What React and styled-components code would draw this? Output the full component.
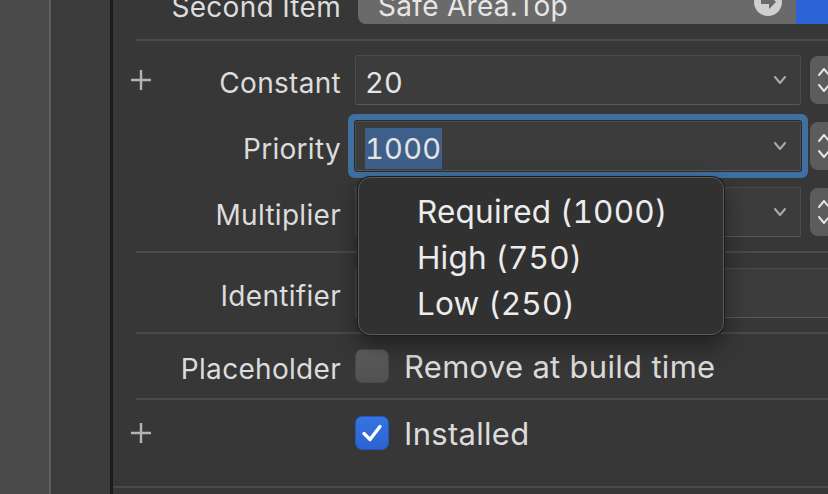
import React from 'react';
import styled, { createGlobalStyle } from 'styled-components';

const GlobalStyle = createGlobalStyle`
  html, body {
    margin: 0;
    padding: 0;
    background: #373737;
    overflow: hidden;
  }
  * {
    box-sizing: border-box;
  }
`;

const PlusIcon = () => (
  <svg width="22" height="22" viewBox="0 0 22 22">
    <path d="M11 1v20M1 11h20" stroke="#b4b4b4" strokeWidth="2.4" fill="none" />
  </svg>
);

const Chevron = ({ up, color = '#a9a9a9', w = 12, weight = 2 }) => (
  <svg width={w} height={w / 2 + 2} viewBox={`0 0 ${w} ${w / 2 + 2}`}>
    <path
      d={up ? `M1 ${w / 2 + 1}L${w / 2} 1L${w - 1} ${w / 2 + 1}` : `M1 1L${w / 2} ${w / 2 + 1}L${w - 1} 1`}
      stroke={color}
      strokeWidth={weight}
      strokeLinecap="round"
      strokeLinejoin="round"
      fill="none"
    />
  </svg>
);

const ArrowCircle = () => (
  <svg width="30" height="30" viewBox="0 0 30 30">
    <circle cx="15" cy="15" r="14" fill="#cfcfcf" />
    <path d="M8 13h8v-5l7 7-7 7v-5H8z" fill="#6a6a6a" />
  </svg>
);

const CheckMark = () => (
  <svg width="22" height="20" viewBox="0 0 22 20">
    <path d="M3 10.5l6 6L19 3.5" stroke="#ffffff" strokeWidth="3.4" strokeLinecap="round" strokeLinejoin="round" fill="none" />
  </svg>
);

const App = () => {
  return (
    <>
      <GlobalStyle />
      <Window>
        <LeftStrip />
        <MidStrip />
        <Inspector>
          <Section $pad="0 0 15px" $top="-16px">
            <Row $h={40}>
              <Cell />
              <Label>Second Item</Label>
              <ItemPopup>
                <ItemValue>
                  <span>Safe Area.Top</span>
                  <ArrowCircle />
                </ItemValue>
                <ItemMenuButton>
                  <Chevron color="#ffffff" w={14} weight={3} />
                </ItemMenuButton>
              </ItemPopup>
            </Row>
          </Section>
          <Divider />

          <Section $pad="14px 0">
            <Row>
              <Cell><PlusIcon /></Cell>
              <Label>Constant</Label>
              <Field>
                <FieldText>20</FieldText>
                <Chevron />
              </Field>
              <Stepper>
                <Chevron up color="#e2e2e2" />
                <Chevron color="#e2e2e2" />
              </Stepper>
            </Row>
            <Row>
              <Cell />
              <Label>Priority</Label>
              <Field $focused>
                <FieldText><Selected>1000</Selected></FieldText>
                <Chevron />
              </Field>
              <Stepper>
                <Chevron up color="#e2e2e2" />
                <Chevron color="#e2e2e2" />
              </Stepper>
            </Row>
            <Row>
              <Cell />
              <Label>Multiplier</Label>
              <Field>
                <FieldText>1</FieldText>
                <Chevron />
              </Field>
              <Stepper>
                <Chevron up color="#e2e2e2" />
                <Chevron color="#e2e2e2" />
              </Stepper>
            </Row>
          </Section>
          <Divider />

          <Section $pad="15px 0 14px">
            <Row>
              <Cell />
              <Label>Identifier</Label>
              <Field $wide />
            </Row>
          </Section>
          <Divider />

          <Section $pad="7px 0">
            <Row>
              <Cell />
              <Label>Placeholder</Label>
              <CheckRow>
                <Checkbox />
                <CheckText>Remove at build time</CheckText>
              </CheckRow>
            </Row>
          </Section>
          <Divider />

          <Section $pad="8px 0 28px">
            <Row>
              <Cell><PlusIcon /></Cell>
              <Label />
              <CheckRow>
                <Checkbox $checked><CheckMark /></Checkbox>
                <CheckText>Installed</CheckText>
              </CheckRow>
            </Row>
          </Section>
          <Divider $full />

          <Menu>
            <MenuItem>Required (1000)</MenuItem>
            <MenuItem>High (750)</MenuItem>
            <MenuItem>Low (250)</MenuItem>
          </Menu>
        </Inspector>
      </Window>
    </>
  );
};

const Window = styled.div`
  display: flex;
  width: 828px;
  height: 494px;
  overflow: hidden;
  font-family: Inter, "Liberation Sans", sans-serif;
`;

const LeftStrip = styled.div`
  width: 51px;
  flex-shrink: 0;
  background: #4b4b4b;
  border-right: 2px solid #5f5f5f;
`;

const MidStrip = styled.div`
  width: 62px;
  flex-shrink: 0;
  background: #3b3b3b;
  border-right: 3px solid #1b1b1b;
`;

const Inspector = styled.div`
  position: relative;
  flex: 1;
  min-width: 0;
  background: #373737;
  display: flex;
  flex-direction: column;
`;

const Section = styled.div`
  display: flex;
  flex-direction: column;
  gap: 16px;
  padding: ${p => p.$pad};
  margin-top: ${p => p.$top || 0};
`;

const Divider = styled.div`
  height: 2px;
  flex-shrink: 0;
  background: #4a4a4a;
  margin-left: ${p => (p.$full ? 0 : 23)}px;
`;

const Row = styled.div`
  display: grid;
  grid-template-columns: 56px 186px 446px 40px;
  align-items: center;
  height: ${p => p.$h || 50}px;
`;

const Cell = styled.div`
  display: flex;
  justify-content: center;
  align-items: center;
`;

const Label = styled.div`
  text-align: right;
  padding: 6px 14px 0 0;
  font-size: 28px;
  color: #dcdcdc;
  letter-spacing: 0.3px;
  white-space: nowrap;
`;

const ItemPopup = styled.div`
  grid-column: 3 / 5;
  display: flex;
  height: 100%;
  padding-left: 3px;
`;

const ItemValue = styled.div`
  flex: 1;
  display: flex;
  align-items: center;
  justify-content: space-between;
  background: #6a6a6a;
  border-radius: 0 0 0 8px;
  padding: 3px 13px 0 20px;
  font-size: 28px;
  color: #e6e6e6;
  letter-spacing: 0.3px;

  svg {
    align-self: flex-start;
    margin-top: 0;
  }
`;

const ItemMenuButton = styled.div`
  width: 45px;
  background: #2b63d7;
  display: flex;
  justify-content: center;
  align-items: flex-start;
  padding: 2px 10px 0 0;
`;

const Field = styled.div`
  grid-column: ${p => (p.$wide ? '3 / 5' : 'auto')};
  height: 50px;
  display: flex;
  align-items: center;
  justify-content: space-between;
  padding: 0 14px 0 9px;
  background: #3c3c3c;
  border: 1px solid #4c4c4c;
  border-bottom-color: #585858;
  border-radius: 2px;
  box-shadow: ${p => (p.$focused ? '0 0 0 1px #2b2b2b, 0 0 0 7px #4070a2' : 'none')};
`;

const FieldText = styled.div`
  padding-top: 4px;
  font-size: 29px;
  color: #e4e4e4;
  letter-spacing: 0.3px;
  font-variant-numeric: tabular-nums;
`;

const Selected = styled.span`
  background: #3e5f89;
  padding: 3px 1px 3px 0;
`;

const Stepper = styled.div`
  margin-left: 9px;
  width: 28px;
  height: 48px;
  border-radius: 8px;
  background: #5c5c5c;
  display: flex;
  flex-direction: column;
  align-items: center;
  justify-content: center;
  gap: 8px;
`;

const CheckRow = styled.div`
  grid-column: 3 / 5;
  display: flex;
  align-items: center;
  gap: 15px;
`;

const Checkbox = styled.div`
  width: 34px;
  height: 34px;
  flex-shrink: 0;
  border-radius: 7px;
  display: flex;
  align-items: center;
  justify-content: center;
  background: ${p => (p.$checked ? 'linear-gradient(#3574e3, #2a63d0)' : 'linear-gradient(#5e5e5e, #515151)')};
  border: 1px solid ${p => (p.$checked ? '#2558b8' : '#4a4a4a')};
`;

const CheckText = styled.div`
  padding-top: 0;
  font-size: 31px;
  color: #dcdcdc;
  letter-spacing: 0.3px;
  white-space: nowrap;
`;

const Menu = styled.div`
  position: absolute;
  left: 245px;
  top: 177px;
  width: 366px;
  height: 158px;
  padding: 10px 0 0 58px;
  background: #313131;
  border: 1px solid #5a5a5a;
  border-radius: 12px;
  box-shadow: 0 0 0 1px #1c1c1c, 0 10px 24px rgba(0, 0, 0, 0.45);
  display: flex;
  flex-direction: column;
`;

const MenuItem = styled.div`
  height: 46px;
  display: flex;
  align-items: center;
  font-size: 31.5px;
  color: #ececec;
  letter-spacing: 0.2px;
  white-space: nowrap;
  font-variant-numeric: tabular-nums;
`;

export default App;
